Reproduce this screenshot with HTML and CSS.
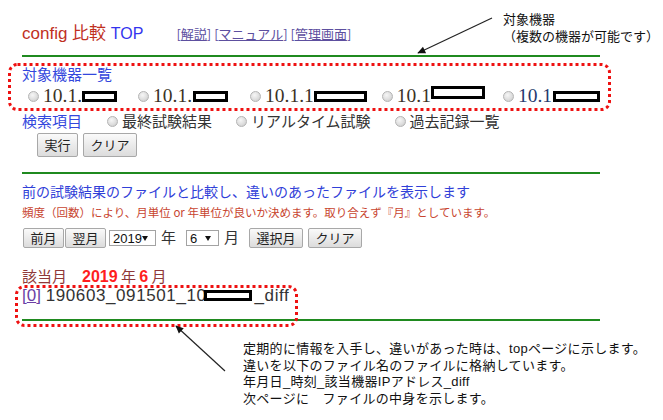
FILE: index.html
```html
<!DOCTYPE html>
<html lang="ja">
<head>
<meta charset="utf-8">
<title>config 比較 TOP</title>
<link rel="stylesheet" href="styles.css">
</head>
<body>
<div class="page">
  <div class="main">
    <header class="head">
      <h1 class="title"><span class="t-red">config 比較</span> <span class="t-blue">TOP</span></h1>
      <nav class="links">[<a href="#">解説</a>] [<a href="#">マニュアル</a>] [<a href="#">管理画面</a>]</nav>
    </header>
    <hr class="rule">

    <section class="devices">
      <div class="label">対象機器一覧</div>
      <div class="dev-row">
        <span class="dev d1"><i class="radio"></i>10.1.<b class="mask m1"></b></span><span class="dev d2"><i class="radio"></i>10.1.<b class="mask m2"></b></span><span class="dev d3"><i class="radio"></i>10.1.1<b class="mask m3"></b></span><span class="dev d4"><i class="radio"></i>10.1<b class="mask m4"></b></span><span class="dev d5"><i class="radio"></i><span class="navy">10.1</span><b class="mask m5"></b></span>
      </div>
      <div class="search-row">
        <span class="label-inline">検索項目</span>
        <span class="opt"><i class="radio"></i>最終試験結果</span>
        <span class="opt"><i class="radio"></i>リアルタイム試験</span>
        <span class="opt"><i class="radio"></i>過去記録一覧</span>
      </div>
      <div class="btn-row">
        <button class="btn">実行</button><button class="btn">クリア</button>
      </div>
    </section>
    <hr class="rule rule2">

    <section class="compare">
      <div class="desc">前の試験結果のファイルと比較し、違いのあったファイルを表示します</div>
      <div class="note">頻度（回数）により、月単位 or 年単位が良いか決めます。取り合えず『月』としています。</div>
      <div class="ctrl-row">
        <button class="btn btn-s">前月</button><button class="btn btn-s">翌月</button>
        <span class="select sel-y"><span>2019</span><i class="caret"></i></span>
        <span class="unit">年</span>
        <span class="select sel-m"><span>6</span><i class="caret"></i></span>
        <span class="unit">月</span>
        <button class="btn btn-s btn-sel">選択月</button><button class="btn btn-s">クリア</button>
      </div>
    </section>

    <section class="result">
      <div class="month">該当月　<b class="hl">2019</b> 年 <b class="hl">6</b> 月</div>
      <div class="file"><span class="idx">[<a href="#">0</a>]</span> <span class="fname">190603_091501_10<b class="mask m6"></b>_diff</span></div>
    </section>
    <hr class="rule rule3">
  </div>

  <div class="anno anno-top">対象機器<br>（複数の機器が可能です）</div>
  <div class="anno anno-bottom">定期的に情報を入手し、違いがあった時は、topページに示します。<br>違いを以下のファイル名のファイルに格納しています。<br>年月日_時刻_該当機器IPアドレス_diff<br>次ページに　ファイルの中身を示します。</div>

  <svg class="overlay" width="663" height="420" viewBox="0 0 663 420" xmlns="http://www.w3.org/2000/svg">
    <defs>
      <marker id="ah" viewBox="0 0 10 10" refX="9" refY="5" markerWidth="9" markerHeight="8" markerUnits="userSpaceOnUse" orient="auto">
        <path d="M0,0.5 L10,5 L0,9.5 z" fill="#111"/>
      </marker>
    </defs>
    <rect x="9.5" y="64.5" width="600" height="45" rx="8" ry="8" fill="none" stroke="#ee1111" stroke-width="3" stroke-dasharray="3 3"/>
    <rect x="16.5" y="286.5" width="280" height="39" rx="8" ry="8" fill="none" stroke="#ee1111" stroke-width="3" stroke-dasharray="3 3"/>
    <line x1="492" y1="18" x2="418" y2="53" stroke="#222" stroke-width="1.2" marker-end="url(#ah)"/>
    <line x1="225" y1="371" x2="176" y2="326" stroke="#222" stroke-width="1.2" marker-end="url(#ah)"/>
  </svg>
</div>
</body>
</html>
```

FILE: styles.css
```css
html, body {
  margin: 0;
  padding: 0;
  background: #ffffff;
}

body {
  font-family: "Noto Sans CJK JP", sans-serif;
  color: #333333;
}

.page {
  position: relative;
  width: 663px;
  height: 420px;
  overflow: hidden;
}

.main {
  padding: 24px 0 0 22px;
  width: 578px;
}

/* header */
.head {
  display: flex;
  align-items: baseline;
  height: 20px;
  line-height: 20px;
}

.title {
  margin: 0;
  font-size: 17px;
  font-weight: normal;
  font-family: "Liberation Sans", "Noto Sans CJK JP", sans-serif;
  line-height: 20px;
  white-space: nowrap;
}

.t-red { color: #c0301e; }
.t-blue { color: #3333ee; font-size: 16px; }

.links {
  margin-left: 33px;
  font-size: 13px;
  color: #5d4f9f;
  white-space: nowrap;
}

.links a {
  color: #5d4f9f;
  text-decoration: underline;
}

.rule {
  border: 0;
  height: 2px;
  background: #1f8a1f;
  margin: 11px 0 0;
}

.rule2 { margin-top: 15px; }
.rule3 { margin-top: 13px; }

/* devices */
.label {
  margin-top: 7px;
  font-size: 15px;
  line-height: 20px;
  color: #3347dd;
}

.dev-row {
  margin-top: 1px;
  padding-left: 6px;
  height: 22px;
  line-height: 22px;
  font-family: "Liberation Serif", serif;
  font-size: 19.5px;
  color: #3a3226;
  white-space: nowrap;
}

.navy { color: #263a6e; }

.radio {
  display: inline-block;
  width: 11px;
  height: 11px;
  box-sizing: border-box;
  border-radius: 50%;
  border: 1px solid #b4b4b4;
  background: radial-gradient(circle at 40% 35%, #f6f6f6 0%, #dedede 55%, #c4c4c4 100%);
  vertical-align: middle;
  margin-right: 4px;
}

.dev-row .radio {
  position: relative;
  top: -1px;
}

.mask {
  display: inline-block;
  height: 11px;
  box-sizing: border-box;
  border: 3px solid #000000;
  background: #ffffff;
  vertical-align: baseline;
}

.m1 { width: 35px; }
.m2 { width: 35px; margin-left: 1px; }
.m3 { width: 53px; }
.m4 { width: 54px; height: 13px; vertical-align: 3px; }
.m5 { width: 47px; margin-left: 1px; }
.m6 { width: 48px; margin-left: -3px; margin-right: 3px; }

.d1 { margin-right: 21px; }
.d2 { margin-right: 22px; }
.d3 { margin-right: 15px; }
.d4 { margin-right: 18px; }

.search-row {
  margin-top: 4px;
  display: flex;
  align-items: center;
  height: 20px;
  font-size: 15px;
  line-height: 20px;
  color: #333333;
  white-space: nowrap;
}

.label-inline {
  color: #3347dd;
  margin-right: 25px;
}

.opt { margin-right: 24px; }

.search-row .radio {
  position: relative;
  top: -1px;
}

.btn-row {
  margin-top: 2px;
  margin-left: 15px;
  display: flex;
  gap: 5px;
}

.btn {
  font-family: "Noto Sans CJK JP", sans-serif;
  font-size: 13px;
  color: #222222;
  height: 24px;
  padding: 0 6.5px;
  margin: 0;
  border: 1px solid #a8a8a8;
  border-radius: 2px;
  background: linear-gradient(#fafafa, #dcdcdc);
  line-height: 20px;
}

/* compare */
.desc {
  margin-top: 7px;
  font-size: 14px;
  line-height: 20px;
  color: #3040d8;
  white-space: nowrap;
}

.note {
  margin-top: 2px;
  font-size: 11.5px;
  line-height: 18px;
  color: #c8452f;
  white-space: nowrap;
}

.ctrl-row {
  margin-top: 7px;
  margin-left: 1px;
  display: flex;
  align-items: center;
  height: 20px;
}

.btn-s {
  height: 20px;
  line-height: 16px;
  margin-right: 1px;
}

.btn-sel { margin-right: 5px; }

.select {
  display: inline-flex;
  align-items: center;
  justify-content: space-between;
  box-sizing: border-box;
  height: 16px;
  border: 1px solid #a3a3a3;
  background: #ffffff;
  padding: 0 7px 0 3px;
  font-family: "Liberation Sans", sans-serif;
  font-size: 13px;
  color: #111111;
}

.sel-y { width: 47px; margin-left: 2px; }
.sel-m { width: 33px; }

.caret {
  width: 0;
  height: 0;
  border-left: 3px solid transparent;
  border-right: 3px solid transparent;
  border-top: 5px solid #111111;
}

.unit {
  font-size: 15px;
  color: #333333;
  margin: 0 10px 0 5px;
  position: relative;
  top: -2px;
}

/* result */
.month {
  margin-top: 19px;
  font-size: 15px;
  line-height: 18px;
  color: #8f3838;
  white-space: nowrap;
}

.hl {
  color: #ff1e1e;
  font-family: "Liberation Sans", sans-serif;
  font-weight: bold;
  font-size: 16px;
}

.file {
  font-family: "Liberation Sans", "Noto Sans CJK JP", sans-serif;
  font-size: 17px;
  line-height: 20px;
  color: #333333;
  white-space: nowrap;
}

.fname { letter-spacing: 0.6px; }

.idx, .idx a { color: #6b3fa5; }

/* annotations */
.anno {
  position: absolute;
  font-family: "Liberation Sans", "Noto Sans CJK JP", sans-serif;
  font-size: 13px;
  color: #111111;
  white-space: nowrap;
}

.anno-top {
  left: 503px;
  top: 11px;
  line-height: 17px;
}

.anno-bottom {
  left: 243px;
  top: 341px;
  line-height: 16.5px;
  letter-spacing: 0.3px;
}

.overlay {
  position: absolute;
  left: 0;
  top: 0;
  pointer-events: none;
}
```
